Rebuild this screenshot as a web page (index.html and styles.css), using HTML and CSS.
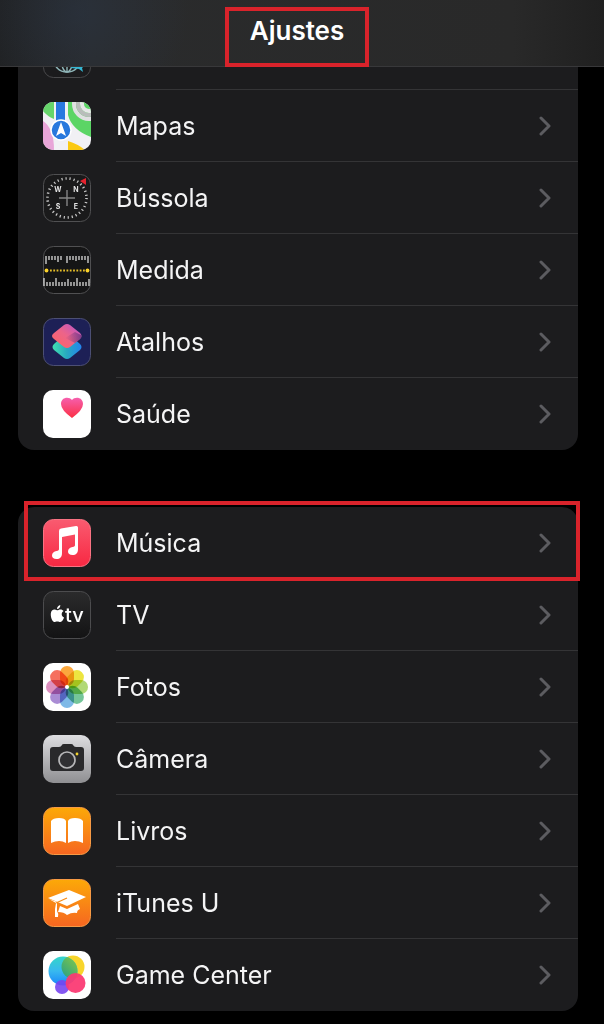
FILE: index.html
```html
<!DOCTYPE html>
<html lang="pt">
<head>
<meta charset="utf-8">
<meta name="viewport" content="width=device-width, initial-scale=1">
<title>Ajustes</title>
<link rel="stylesheet" href="styles.css">
</head>
<body>
<header class="topbar">
  <h1 class="title">Ajustes</h1>
</header>
<main class="content">
  <ul class="group group-scrolled">
    <li class="item">
      <div class="row">
        <svg class="icon" viewBox="0 0 48 48" aria-hidden="true">
          <rect x=".5" y=".5" width="47" height="47" rx="10" fill="#1b1b1d" stroke="#4a4a4c"/>
          <g fill="none" stroke="#8fb5b8" stroke-width="1.4"><circle cx="24" cy="28" r="14"/><ellipse cx="24" cy="28" rx="6" ry="14"/><path d="M24 14v28M10 28h28M13 37q11-5 22 0"/></g>
          <path d="M28 35h14l-3 3 1 4-4-3-8-1z" fill="#35b7d4"/>
        </svg>
      </div>
    </li>
    <li class="item">
      <a class="row" href="#mapas">
        <svg class="icon" viewBox="0 0 48 48" aria-hidden="true">
          <defs><clipPath id="map-clip"><rect width="48" height="48" rx="10"/></clipPath></defs>
          <g clip-path="url(#map-clip)">
            <rect width="48" height="48" fill="#f1f0f4"/>
            <path d="M0 0h11v17Q4 14 0 9z" fill="#66d56b"/>
            <path d="M25 0h23v35Q29 28 25 13z" fill="#5bd565"/>
            <g fill="none" stroke-width="4"><circle cx="46" cy="2" r="15" stroke="#e0e0e2"/><circle cx="46" cy="2" r="11" stroke="#b9bdbb"/><circle cx="46" cy="2" r="7" stroke="#e7e7e8"/></g>
            <path d="M0 19q11 7 11 29H0z" fill="#e8a5d8"/>
            <path d="M25 39q10 3 17 9H25z" fill="#fbc911"/>
            <path d="M13 0h9v24h-9z" fill="#2878e0"/>
            <circle cx="18" cy="28" r="10" fill="#2878dd" stroke="#fff" stroke-width="1.5"/>
            <path d="M18 20l5 14-5-3-5 3z" fill="#fff"/>
          </g>
        </svg>
        <span class="label">Mapas</span>
        <svg class="chevron" viewBox="0 0 12 20" aria-hidden="true"><path d="M2 2l8 8-8 8"/></svg>
      </a>
    </li>
    <li class="item">
      <a class="row" href="#bussola">
        <svg class="icon" viewBox="0 0 48 48" aria-hidden="true">
          <rect x=".5" y=".5" width="47" height="47" rx="10" fill="#1a1a1b" stroke="#505052"/>
          <circle cx="24" cy="24" r="19.500" fill="none" stroke="#c6c6c6" stroke-width="2.600" stroke-dasharray="1.200 2.880"/>
          <path d="M24 16v16M16 24h16" stroke="#858585" stroke-width="1.4"/>
          <path d="M37 7l6-3v7z" fill="#e5232e"/>
          <g class="compass-text"><text x="15" y="18">W</text><text x="33" y="18">N</text><text x="15" y="35">S</text><text x="33" y="35">E</text></g>
        </svg>
        <span class="label">Bússola</span>
        <svg class="chevron" viewBox="0 0 12 20" aria-hidden="true"><path d="M2 2l8 8-8 8"/></svg>
      </a>
    </li>
    <li class="item">
      <a class="row" href="#medida">
        <svg class="icon" viewBox="0 0 48 48" aria-hidden="true">
          <rect x=".5" y=".5" width="47" height="47" rx="10" fill="#151516" stroke="#505052"/>
          <g stroke="#e9e9e9" stroke-width="1.2" fill="none">
            <path d="M3 10v8M6 10v4M9 10v4M12 10v4M15 10v6M18 10v4M24 10v7M27 10v4M30 10v4M33 10v5M36 10v4M39 10v4M42 10v4M45 10v7"/>
            <path d="M1 32v8M4 36v4M7 36v4M10 36v4M13 32v8M16 36v4M19 36v4M22 36v4M25 33v7M28 36v4M31 36v4M34 32v8M37 36v4M40 36v4M43 36v4M46 33v7"/>
          </g>
          <path d="M7 24.500h35" stroke="#e5bd27" stroke-width="1.800" stroke-dasharray="1.800 1.500"/>
          <g fill="#fbd22b"><circle cx="3.500" cy="24.500" r="1.900"/><circle cx="44.500" cy="24.500" r="1.900"/></g>
        </svg>
        <span class="label">Medida</span>
        <svg class="chevron" viewBox="0 0 12 20" aria-hidden="true"><path d="M2 2l8 8-8 8"/></svg>
      </a>
    </li>
    <li class="item">
      <a class="row" href="#atalhos">
        <svg class="icon" viewBox="0 0 48 48" aria-hidden="true">
          <defs>
            <linearGradient id="cut-top" x1="0" y1="1" x2="1" y2="0"><stop offset="0" stop-color="#ff6361"/><stop offset=".5" stop-color="#ed6488"/><stop offset="1" stop-color="#b552d2"/></linearGradient>
            <linearGradient id="cut-low" x1="0" y1="0" x2="1" y2="0"><stop offset="0" stop-color="#40dfb0"/><stop offset=".5" stop-color="#27a9c0"/><stop offset="1" stop-color="#2484ef"/></linearGradient>
            <linearGradient id="cut-shade" x1="0" y1="0" x2="1" y2="0"><stop offset="0" stop-color="#7b3a78" stop-opacity="0"/><stop offset="1" stop-color="#6a3580" stop-opacity=".8"/></linearGradient>
          </defs>
          <rect x=".5" y=".5" width="47" height="47" rx="10" fill="#1d2056" stroke="#4c4f74"/>
          <path d="M21 17q3-2 6 0l10 9q3 3 0 6l-10 8q-3 2-6 0l-10-8q-3-3 0-6z" fill="url(#cut-low)"/>
          <path d="M21 7q3-2 6 0l10 8q3 3 0 6l-10 8q-3 2-6 0l-10-8q-4-3 0-6z" fill="url(#cut-top)"/>
          <path d="M22 20l10-6 6 3q1 3-1 4l-5 4z" fill="url(#cut-shade)"/>
        </svg>
        <span class="label">Atalhos</span>
        <svg class="chevron" viewBox="0 0 12 20" aria-hidden="true"><path d="M2 2l8 8-8 8"/></svg>
      </a>
    </li>
    <li class="item">
      <a class="row" href="#saude">
        <svg class="icon" viewBox="0 0 48 48" aria-hidden="true">
          <defs><linearGradient id="heart" x1="0" y1="0" x2="0" y2="1"><stop offset="0" stop-color="#f65fae"/><stop offset="1" stop-color="#fb3044"/></linearGradient></defs>
          <rect width="48" height="48" rx="10" fill="#fff"/>
          <path d="M29 28Q18 20 18 14c0-7 8-8 11-4 3-4 11-3 11 4q0 6-11 14z" fill="url(#heart)"/>
        </svg>
        <span class="label">Saúde</span>
        <svg class="chevron" viewBox="0 0 12 20" aria-hidden="true"><path d="M2 2l8 8-8 8"/></svg>
      </a>
    </li>
  </ul>

  <ul class="group">
    <li class="item item-marked">
      <a class="row" href="#musica">
        <svg class="icon" viewBox="0 0 48 48" aria-hidden="true">
          <defs><linearGradient id="music" x1="0" y1="0" x2="0" y2="1"><stop offset="0" stop-color="#f95b70"/><stop offset="1" stop-color="#f82842"/></linearGradient></defs>
          <rect x=".5" y=".5" width="47" height="47" rx="10" fill="url(#music)" stroke="#fa7383"/>
          <path d="M16 12q0-2 2-2.400L33 7q2-.3 2 1.500v21.500c0 4-2 6-5.500 6-3 0-4.500-1.500-4.500-3.500 0-2.500 2-4 4.500-4.500 2-.4 2.500-.6 2.500-2.500V15.500L19 18v16c0 4-2 6-5.500 6-3 0-4.500-1.500-4.500-3.500 0-2.500 2-4 4.500-4.500 2-.4 2.500-.6 2.500-2.500z" fill="#fff"/>
        </svg>
        <span class="label">Música</span>
        <svg class="chevron" viewBox="0 0 12 20" aria-hidden="true"><path d="M2 2l8 8-8 8"/></svg>
      </a>
    </li>
    <li class="item">
      <a class="row" href="#tv">
        <svg class="icon" viewBox="0 0 48 48" aria-hidden="true">
          <defs><linearGradient id="tv" x1="0" y1="0" x2="0" y2="1"><stop offset="0" stop-color="#2b2b2c"/><stop offset="1" stop-color="#131314"/></linearGradient></defs>
          <rect x=".5" y=".5" width="47" height="47" rx="10" fill="url(#tv)" stroke="#4c4c4e"/>
          <path d="M14 18c0-2 1.500-3.500 3.300-4 .2 2.200-1.300 4-3.300 4zM14 19.300c1.200 0 2-.8 3.500-.8 1.300 0 2.400.6 3.100 1.600-2.800 1.700-2.300 5.400.5 6.500-.8 2.100-2 4.400-3.700 4.400-1.100 0-1.700-.6-3.100-.6s-2.100.6-3.100.6c-2.500 0-5-8.900-2.200-11.500 1.700-1.500 3.500-.9 5-.2z" fill="#fff"/>
          <text class="tv-text" x="22" y="31">tv</text>
        </svg>
        <span class="label">TV</span>
        <svg class="chevron" viewBox="0 0 12 20" aria-hidden="true"><path d="M2 2l8 8-8 8"/></svg>
      </a>
    </li>
    <li class="item">
      <a class="row" href="#fotos">
        <svg class="icon" viewBox="0 0 48 48" aria-hidden="true">
          <rect width="48" height="48" rx="10" fill="#fff"/>
          <g class="petals">
            <rect x="17" y="3" width="14" height="20" rx="7" fill="#fb9d28"/>
            <rect x="17" y="3" width="14" height="20" rx="7" fill="#ebe32b" transform="rotate(45 24 24)"/>
            <rect x="17" y="3" width="14" height="20" rx="7" fill="#a9d568" transform="rotate(90 24 24)"/>
            <rect x="17" y="3" width="14" height="20" rx="7" fill="#65bf8e" transform="rotate(135 24 24)"/>
            <rect x="17" y="3" width="14" height="20" rx="7" fill="#70b2e5" transform="rotate(180 24 24)"/>
            <rect x="17" y="3" width="14" height="20" rx="7" fill="#a180d0" transform="rotate(225 24 24)"/>
            <rect x="17" y="3" width="14" height="20" rx="7" fill="#d884b8" transform="rotate(270 24 24)"/>
            <rect x="17" y="3" width="14" height="20" rx="7" fill="#f4604d" transform="rotate(315 24 24)"/>
          </g>
          <circle cx="24" cy="24" r="2" fill="#fff"/>
        </svg>
        <span class="label">Fotos</span>
        <svg class="chevron" viewBox="0 0 12 20" aria-hidden="true"><path d="M2 2l8 8-8 8"/></svg>
      </a>
    </li>
    <li class="item">
      <a class="row" href="#camera">
        <svg class="icon" viewBox="0 0 48 48" aria-hidden="true">
          <defs><linearGradient id="camera-bg" x1="0" y1="0" x2="0" y2="1"><stop offset="0" stop-color="#dddde0"/><stop offset="1" stop-color="#8f8f92"/></linearGradient></defs>
          <rect width="48" height="48" rx="10" fill="url(#camera-bg)"/>
          <path d="M10 12h6q2 0 3-2 0-1 2-1h7q2 0 2 1 1 2 3 2h5q3 0 3 3v18q0 3-3 3H10q-3 0-3-3V15q0-3 3-3z" fill="#29292b"/>
          <circle cx="24" cy="25" r="8" fill="#303033" stroke="#b6b6b8" stroke-width="1.700"/>
          <circle cx="34" cy="19" r="1.400" fill="#f3d32e"/>
        </svg>
        <span class="label">Câmera</span>
        <svg class="chevron" viewBox="0 0 12 20" aria-hidden="true"><path d="M2 2l8 8-8 8"/></svg>
      </a>
    </li>
    <li class="item">
      <a class="row" href="#livros">
        <svg class="icon" viewBox="0 0 48 48" aria-hidden="true">
          <defs><linearGradient id="orange" x1="0" y1="0" x2="0" y2="1"><stop offset="0" stop-color="#fca908"/><stop offset="1" stop-color="#f66621"/></linearGradient></defs>
          <rect x=".5" y=".5" width="47" height="47" rx="10" fill="url(#orange)" stroke="#f79a45"/>
          <path d="M8 36V14q2-3 8-3t7 3v22q-3-2-7-2t-8 2zM25 36V14q1-3 7-3t8 3v22q-4-2-8-2t-7 2z" fill="#fff"/>
        </svg>
        <span class="label">Livros</span>
        <svg class="chevron" viewBox="0 0 12 20" aria-hidden="true"><path d="M2 2l8 8-8 8"/></svg>
      </a>
    </li>
    <li class="item">
      <a class="row" href="#itunes-u">
        <svg class="icon" viewBox="0 0 48 48" aria-hidden="true">
          <rect x=".5" y=".5" width="47" height="47" rx="10" fill="url(#orange)" stroke="#f79a45"/>
          <path d="M5 19l21-8 17 7-19 9z" fill="#fff"/>
          <path d="M17 27l7 3 11-5 2 5q-3 1-3 4-5-1-10 2-3-3-9-3zM6 20l8 3v9q2 3 1 6h-3v-8l1-6z" fill="#fff"/>
          <path d="M13 24l11-5" stroke="#f98d16" stroke-width="1.300"/>
        </svg>
        <span class="label">iTunes U</span>
        <svg class="chevron" viewBox="0 0 12 20" aria-hidden="true"><path d="M2 2l8 8-8 8"/></svg>
      </a>
    </li>
    <li class="item">
      <a class="row" href="#game-center">
        <svg class="icon" viewBox="0 0 48 48" aria-hidden="true">
          <defs>
            <linearGradient id="gc-blue" x1="0" y1="0" x2="0" y2="1"><stop offset="0" stop-color="#35d6c8"/><stop offset=".5" stop-color="#38b9ef"/><stop offset="1" stop-color="#1885fa"/></linearGradient>
            <linearGradient id="gc-green" x1="1" y1="0" x2="0" y2="1"><stop offset="0" stop-color="#9cd238"/><stop offset="1" stop-color="#249f87"/></linearGradient>
            <clipPath id="gc-clip"><circle cx="20" cy="20" r="14.500"/></clipPath>
          </defs>
          <rect width="48" height="48" rx="10" fill="#fff"/>
          <circle cx="30" cy="16" r="11.500" fill="#f8d52b"/>
          <circle cx="20" cy="20" r="14.500" fill="url(#gc-blue)"/>
          <circle cx="30" cy="16" r="11.500" fill="url(#gc-green)" clip-path="url(#gc-clip)"/>
          <circle cx="19" cy="36" r="7" fill="#7745f0" opacity=".9"/>
          <circle cx="32.500" cy="32" r="10" fill="#fb3973" opacity=".94"/>
        </svg>
        <span class="label">Game Center</span>
        <svg class="chevron" viewBox="0 0 12 20" aria-hidden="true"><path d="M2 2l8 8-8 8"/></svg>
      </a>
    </li>
  </ul>
</main>
</body>
</html>
```
FILE: styles.css
```css
* {
  box-sizing: border-box;
}

body {
  margin: 0;
  background: #000;
  color: #f4f4f5;
  font-family: Inter, Roboto, "Liberation Sans", sans-serif;
}

.topbar {
  position: sticky;
  top: 0;
  z-index: 2;
  display: flex;
  justify-content: center;
  height: 67px;
  padding: 7px 10px 0 0;
  border-bottom: 1px solid #38383a;
  background:
    radial-gradient(circle at 13% 20%, rgba(42, 54, 72, 0.5), transparent 110px),
    linear-gradient(90deg, #202122, #2a2b2c 15%, #292929 85%, #202020);
}

.title {
  margin: 0;
  width: 144px;
  height: 60px;
  border: 4px solid #d9232b;
  color: #fff;
  font-size: 26px;
  font-weight: 600;
  line-height: 40px;
  text-align: center;
}

.content {
  display: flex;
  flex-direction: column;
  gap: 57px;
  padding: 0 26px 14px 18px;
}

.group {
  margin: 0;
  padding: 0;
  border-radius: 16px;
  background: #1c1c1e;
  list-style: none;
}

/* The first group starts behind the top bar. */
.group-scrolled {
  margin-top: -49px;
}

.item {
  position: relative;
}

.item + .item::before {
  content: "";
  position: absolute;
  top: -1px;
  left: 98px;
  right: 0;
  height: 1px;
  background: #343436;
}

.row {
  display: flex;
  align-items: center;
  height: 72px;
  padding: 0 26px 0 25px;
  color: inherit;
  text-decoration: none;
}

.icon {
  flex: none;
  width: 48px;
  height: 48px;
}

.label {
  flex: 1;
  margin-left: 25px;
  font-size: 25px;
  line-height: 32px;
}

.chevron {
  flex: none;
  width: 14px;
  height: 20px;
  fill: none;
  stroke: #5c5c60;
  stroke-width: 3;
  stroke-linecap: round;
  stroke-linejoin: round;
}

.item-marked::after {
  content: "";
  position: absolute;
  z-index: 1;
  inset: -6px -2px -2px 6px;
  border: 4px solid #d9232b;
  pointer-events: none;
}

.compass-text {
  fill: #e4e4e4;
  font-size: 7px;
  font-weight: 700;
  text-anchor: middle;
}

.tv-text {
  fill: #fff;
  font-size: 20px;
  font-weight: 500;
}

.petals rect {
  mix-blend-mode: multiply;
  opacity: 0.9;
}
```
